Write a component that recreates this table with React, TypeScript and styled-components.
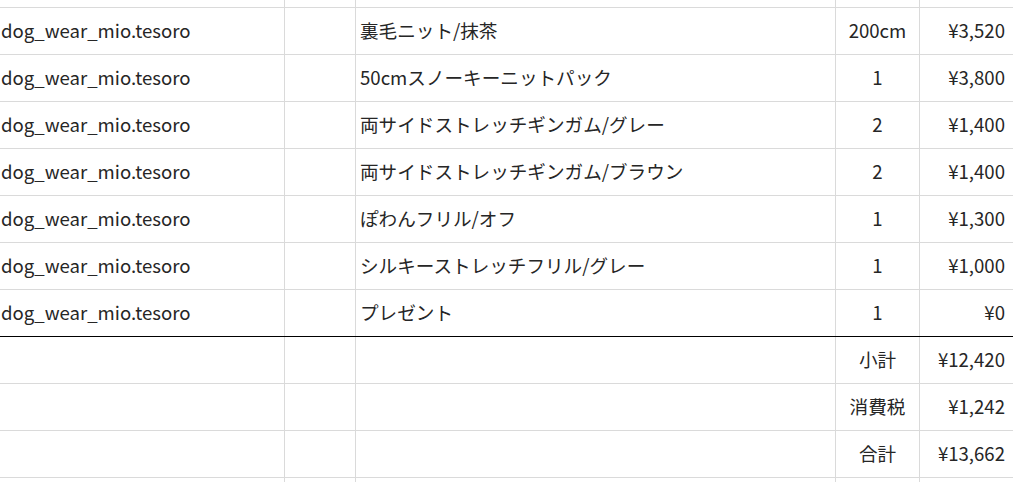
import React from "react";
import styled, { createGlobalStyle } from "styled-components";

const Global = createGlobalStyle`
  html, body { margin: 0; padding: 0; background: #ffffff; }
  body { overflow: hidden; }
`;

const Sheet = styled.div`
  width: 1013px;
  height: 482px;
  overflow: hidden;
  font-family: "Noto Sans CJK JP", "Noto Sans", sans-serif;
  font-size: 18.6px;
  font-weight: 400;
  color: #262626;
`;

const Row = styled.div<{ $h: number; $strong?: boolean }>`
  display: grid;
  grid-template-columns: 285px 71px 480px 84px 94px;
  height: ${(p) => p.$h}px;
  box-sizing: border-box;
  border-bottom: 1px solid ${(p) => (p.$strong ? "#000000" : "#dadada")};
`;

const Cell = styled.div<{ $align?: "left" | "center" | "right" }>`
  box-sizing: border-box;
  border-right: 1px solid #dadada;
  display: flex;
  align-items: center;
  white-space: nowrap;
  overflow: hidden;
  padding-bottom: 3px;
  justify-content: ${(p) =>
    p.$align === "center" ? "center" : p.$align === "right" ? "flex-end" : "flex-start"};
  padding-left: ${(p) => (p.$align ? "0" : "1px")};
  padding-right: ${(p) => (p.$align === "right" ? "8px" : "0")};
`;

const ItemCell = styled(Cell)`
  padding-left: 4px;
`;

type Item = { shop: string; name: string; qty: string; price: string };

const items: Item[] = [
  { shop: "dog_wear_mio.tesoro", name: "裏毛ニット/抹茶", qty: "200cm", price: "¥3,520" },
  { shop: "dog_wear_mio.tesoro", name: "50cmスノーキーニットパック", qty: "1", price: "¥3,800" },
  { shop: "dog_wear_mio.tesoro", name: "両サイドストレッチギンガム/グレー", qty: "2", price: "¥1,400" },
  { shop: "dog_wear_mio.tesoro", name: "両サイドストレッチギンガム/ブラウン", qty: "2", price: "¥1,400" },
  { shop: "dog_wear_mio.tesoro", name: "ぽわんフリル/オフ", qty: "1", price: "¥1,300" },
  { shop: "dog_wear_mio.tesoro", name: "シルキーストレッチフリル/グレー", qty: "1", price: "¥1,000" },
  { shop: "dog_wear_mio.tesoro", name: "プレゼント", qty: "1", price: "¥0" },
];

const totals = [
  { label: "小計", value: "¥12,420" },
  { label: "消費税", value: "¥1,242" },
  { label: "合計", value: "¥13,662" },
];

export default function App() {
  return (
    <>
      <Global />
      <Sheet>
        <Row $h={8}>
          <Cell />
          <Cell />
          <Cell />
          <Cell />
          <Cell />
        </Row>
        {items.map((it, i) => (
          <Row key={i} $h={47} $strong={i === items.length - 1}>
            <Cell>{it.shop}</Cell>
            <Cell />
            <ItemCell>{it.name}</ItemCell>
            <Cell $align="center">{it.qty}</Cell>
            <Cell $align="right">{it.price}</Cell>
          </Row>
        ))}
        {totals.map((t) => (
          <Row key={t.label} $h={47}>
            <Cell />
            <Cell />
            <Cell />
            <Cell $align="center">{t.label}</Cell>
            <Cell $align="right">{t.value}</Cell>
          </Row>
        ))}
        <Row $h={20}>
          <Cell />
          <Cell />
          <Cell />
          <Cell />
          <Cell />
        </Row>
      </Sheet>
    </>
  );
}
